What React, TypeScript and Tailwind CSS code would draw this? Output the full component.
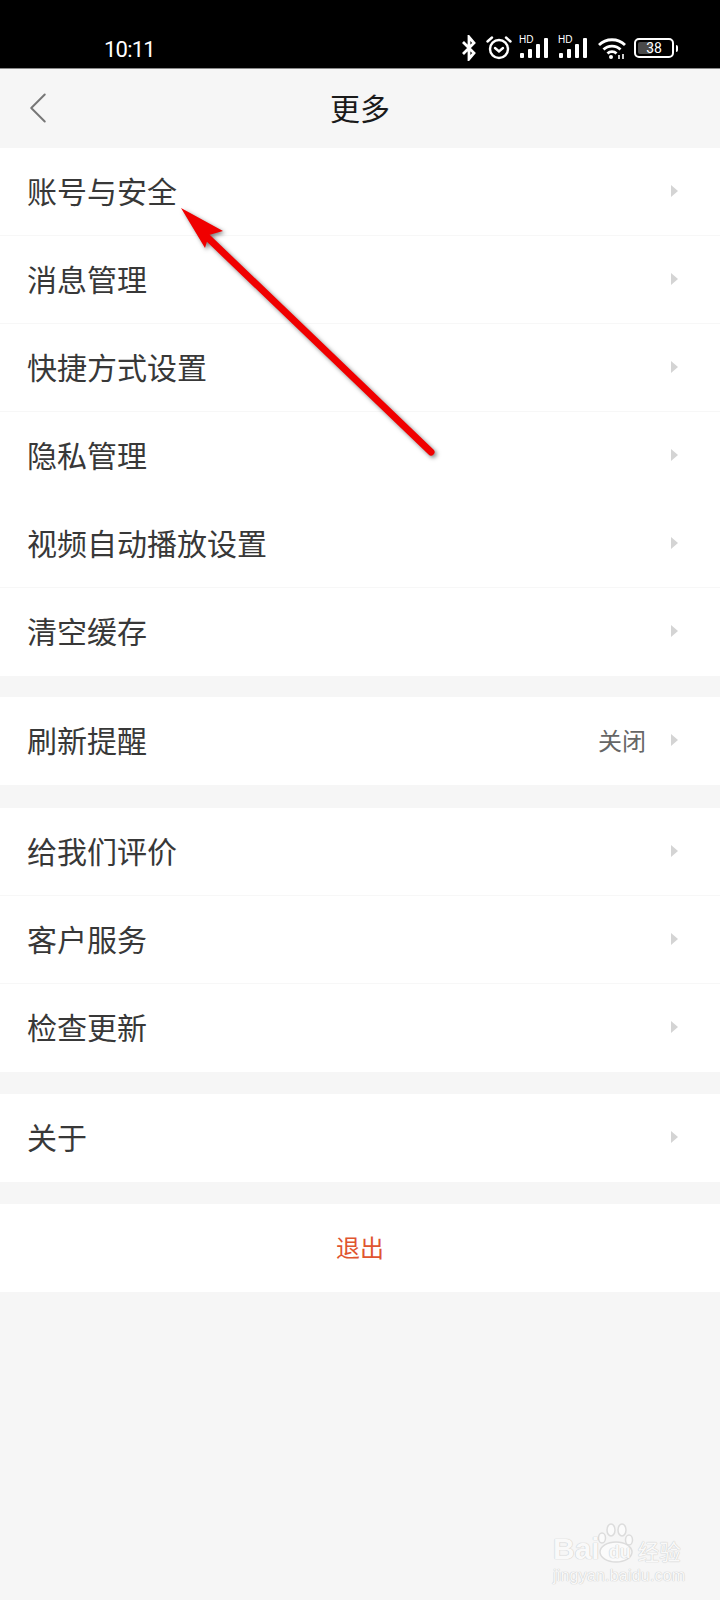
import { ChevronLeft } from "lucide-react";

const CJK = "font-['Roboto','Noto_Sans_CJK_SC',sans-serif]";

const Row = ({ label, value, last }: { label: string; value?: string; last?: boolean }) => {
  return (
    <div className={`flex h-[88px] items-center bg-white pl-[27px] pr-[42px] ${last ? "" : "border-b border-[#f7f7f7]"}`}>
      <span className="flex-1 pt-[2px] text-[30px] leading-none text-[#383838]">{label}</span>
      {value && <span className="mr-[25px] pt-[2px] text-2xl leading-none text-[#666666]">{value}</span>}
      <span className="mb-[2px] h-0 w-0 border-y-[6px] border-l-[7px] border-y-transparent border-l-[#d4d4d4]" />
    </div>
  );
};

const Signal = () => (
  <div className="relative h-[24px] w-[32px]">
    <span className="absolute left-0 top-[-1px] font-['Liberation_Sans',sans-serif] text-[10px] leading-none text-white">HD</span>
    <svg width="32" height="24" viewBox="0 0 32 24" className="absolute left-0 top-0">
      <rect x="1" y="17" width="4" height="5" rx="1" fill="#fff" />
      <rect x="9" y="13" width="4" height="9" rx="1" fill="#fff" />
      <rect x="17" y="8" width="4" height="14" rx="1" fill="#fff" />
      <rect x="25" y="2" width="4" height="20" rx="1" fill="#fff" />
    </svg>
  </div>
);

const StatusBar = () => (
  <div className="flex h-[69px] items-center border-b border-[#8a8a8a] bg-black pt-[28px] text-white">
    <span className="ml-[104px] pt-[3px] font-['Roboto',sans-serif] text-[22px] leading-[26px] tracking-[-0.8px]">10:11</span>
    <div className="ml-auto mr-[42px] flex items-center">
      <svg width="16" height="26" viewBox="0 0 16 26" fill="none" stroke="#fff" strokeWidth="2.8">
        <path d="M2 7l11 11-5 6V2l5 6L2 19" />
      </svg>
      <svg width="26" height="26" viewBox="0 0 26 26" fill="none" stroke="#fff" strokeWidth="2.4" className="ml-[9px]">
        <circle cx="13" cy="14" r="9" />
        <path d="M9 13l4 3.500 4-3.500" strokeLinecap="round" />
        <path d="M1.500 6.500L6 2.500M24.500 6.500L20 2.500" strokeLinecap="round" />
      </svg>
      <div className="ml-[7px]"><Signal /></div>
      <div className="ml-[7px]"><Signal /></div>
      <svg width="30" height="24" viewBox="0 0 30 24" fill="none" stroke="#fff" strokeWidth="2.800" className="ml-[7px]">
        <path d="M2 9c7-7 19-7 26 0M6.500 13.500c4.500-4.500 12.500-4.500 17 0M10.500 17.500c2.500-2.500 6.500-2.500 9 0" />
        <circle cx="14" cy="21" r="2" fill="#fff" stroke="none" />
        <path d="M22 19v4M26 18v5" strokeWidth="1.600" />
      </svg>
      <div className="ml-[7px] flex items-center">
        <div className="relative flex h-[20px] w-[40px] items-center justify-center rounded-[5px] border-2 border-white">
          <div className="absolute bottom-[2px] left-[2px] top-[2px] w-[14px] rounded-[2px] bg-[#4a4a4a]" />
          <span className="relative font-['Roboto',sans-serif] text-[14px] leading-none text-white">38</span>
        </div>
        <div className="ml-[2px] h-[7px] w-[2px] rounded-r-sm bg-white" />
      </div>
    </div>
  </div>
);

const Arrow = () => (
  <svg width="720" height="500" viewBox="0 0 720 500" className="absolute left-0 top-0 drop-shadow-[2px_2px_2px_rgba(0,0,0,0.5)]">
    <path d="M207 237L431 452" stroke="#f00000" strokeWidth="7" strokeLinecap="round" />
    <path d="M181 208L223 231L209 235L205 248Z" fill="#f00000" />
  </svg>
);

const Watermark = () => (
  <div className="absolute left-[553px] top-[1532px] text-[#f9f9f9] [text-shadow:0_0_1px_#c8c8c8,0_0_1px_#c8c8c8]">
    <svg width="38" height="42" viewBox="0 0 38 42" className="absolute left-[44px] top-[-10px]" fill="#fbfbfb" stroke="#dcdcdc" strokeWidth="1.500">
      <ellipse cx="5" cy="16" rx="3.500" ry="5" />
      <ellipse cx="14" cy="8" rx="4" ry="6" />
      <ellipse cx="25" cy="8" rx="4" ry="6" />
      <ellipse cx="32" cy="18" rx="3.500" ry="5" />
      <ellipse cx="19" cy="30" rx="16" ry="10" />
    </svg>
    <div className="relative flex h-[32px] items-end font-['Liberation_Sans','Noto_Sans_CJK_SC',sans-serif] leading-none">
      <span className="text-[30px] font-bold">Bai</span>
      <span className="ml-[9px] w-[28px] pb-[3px] text-[18px] font-bold">du</span>
      <span className="ml-[1px] text-[21.5px]">经验</span>
    </div>
    <div className="relative mt-[4px] font-['Liberation_Sans',sans-serif] text-[16px] leading-none tracking-[0.2px]">jingyan.baidu.com</div>
  </div>
);

export default function App() {
  return (
    <div className={`relative h-[1600px] w-[720px] overflow-hidden bg-[#f6f6f6] ${CJK}`}>
      <StatusBar />
      <header className="relative flex h-[79px] items-center justify-center">
        <ChevronLeft className="absolute left-[11px] top-[12px] text-[#777777]" size={54} strokeWidth={2} absoluteStrokeWidth />
        <h1 className="pt-[2px] text-[30px] leading-none text-[#1a1a1a]">更多</h1>
      </header>
      <section>
        <Row label="账号与安全" />
        <Row label="消息管理" />
        <Row label="快捷方式设置" />
        <Row label="隐私管理" last />
        <Row label="视频自动播放设置" />
        <Row label="清空缓存" last />
      </section>
      <section className="relative mt-[21px]">
        <Row label="刷新提醒" value="关闭" last />
      </section>
      <section className="mt-[23px]">
        <Row label="给我们评价" />
        <Row label="客户服务" />
        <Row label="检查更新" last />
      </section>
      <section className="mt-[22px]">
        <Row label="关于" last />
      </section>
      <div className="mt-[22px] flex h-[88px] items-center justify-center bg-white pt-[2px] text-2xl leading-none text-[#e0552f]">退出</div>
      <Arrow />
      <Watermark />
    </div>
  );
}
